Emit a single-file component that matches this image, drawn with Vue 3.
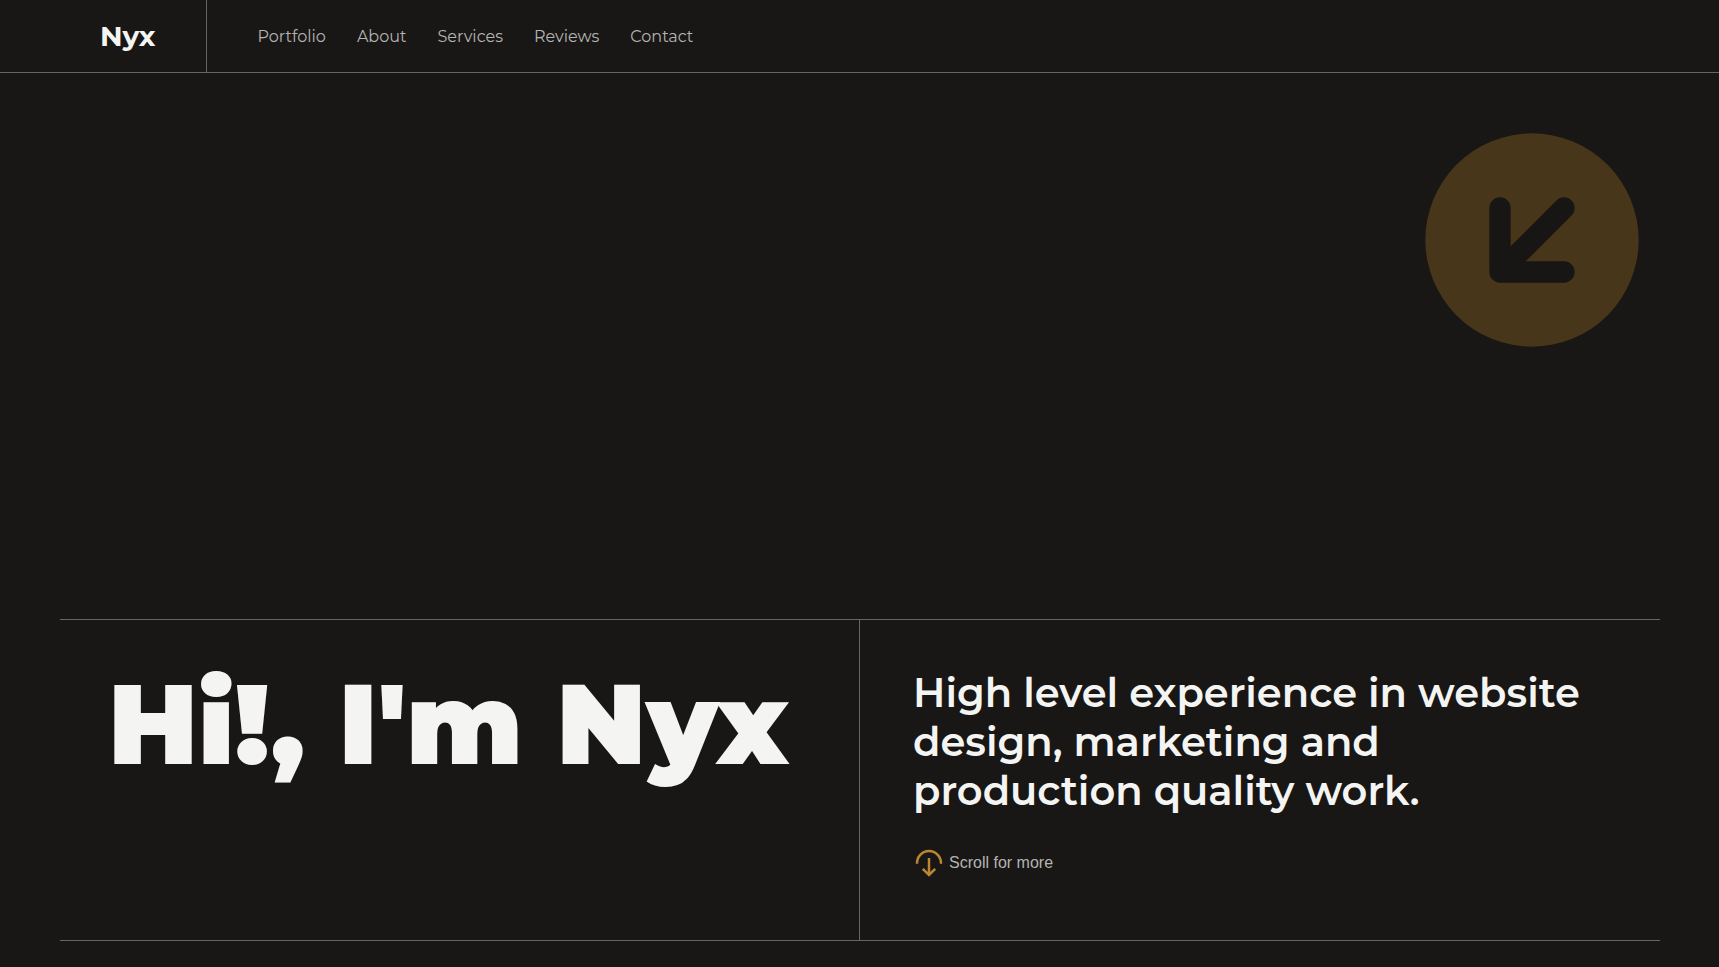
<script setup>
const links = ['Portfolio', 'About', 'Services', 'Reviews', 'Contact']
</script>

<template>
  <div class="page">
    <header class="header">
      <a class="brand" href="#home">Nyx</a>
      <nav class="nav" aria-label="Main">
        <a v-for="link in links" :key="link" :href="'#' + link.toLowerCase()">{{ link }}</a>
      </nav>
    </header>

    <main id="home" class="hero">
      <div class="stage">
        <svg class="badge" viewBox="0 0 24 24" aria-hidden="true">
          <circle cx="12" cy="12" r="10" fill="#473619" />
          <path d="M9 9v6h6M9 15l6-6" fill="none" stroke="#171614" stroke-width="2" stroke-linecap="round" stroke-linejoin="round" />
        </svg>
      </div>

      <section class="intro">
        <div class="greeting">
          <h1>Hi!, I'm Nyx</h1>
        </div>
        <div class="summary">
          <p>High level experience in website design, marketing and production quality work.</p>
          <a class="scroll" href="#portfolio">
            <svg viewBox="0 0 32 32" aria-hidden="true">
              <path d="M4 16.7v-.7a12 12 0 0 1 24 0v.7M16 11v17M9.8 21.8l6.2 6.2 6.2-6.2" fill="none" stroke="#bd8730" stroke-width="2.5" />
            </svg>
            <span>Scroll for more</span>
          </a>
        </div>
      </section>
    </main>
  </div>
</template>

<style>
body {
  margin: 0;
  background: #181715;
}
</style>

<style scoped>
.page {
  display: flex;
  flex-direction: column;
  min-height: 100vh;
  box-sizing: border-box;
  padding-bottom: 26px;
  background: #181715;
  color: #f4f4f2;
  font-family: Montserrat, Inter, sans-serif;
}

a {
  color: inherit;
  text-decoration: none;
}

.header {
  display: flex;
  height: 72px;
  border-bottom: 1px solid #666563;
}

.brand {
  display: flex;
  align-items: center;
  padding: 0 51px 0 100px;
  border-right: 1px solid #666563;
  font-size: 28px;
  font-weight: 700;
}

.nav {
  display: flex;
  align-items: center;
  gap: 31px;
  padding-left: 50px;
  color: #b5b4b2;
  font-size: 16px;
  font-weight: 400;
}

.hero {
  display: flex;
  flex: 1;
  flex-direction: column;
  margin: 0 59px 0 60px;
}

.stage {
  display: flex;
  flex: 1;
  justify-content: flex-end;
  align-items: flex-start;
  padding-top: 39px;
}

.badge {
  display: block;
  width: 256px;
  height: 256px;
}

.intro {
  display: grid;
  grid-template-columns: 1fr 1fr;
  border-top: 1px solid #666563;
  border-bottom: 1px solid #666563;
}

.greeting {
  padding: 48px;
  border-right: 1px solid #666563;
}

h1 {
  margin: 0;
  font-size: 112px;
  font-weight: 900;
  line-height: 112px;
  white-space: nowrap;
}

.summary {
  padding: 48px 53px 61px;
}

p {
  margin: 0 0 32px;
  font-size: 40px;
  font-weight: 600;
  line-height: 49px;
}

.scroll {
  display: inline-flex;
  align-items: center;
  gap: 4px;
  color: #b5b4b2;
  font-family: "Liberation Sans", Arial, sans-serif;
  font-size: 16px;
  vertical-align: top;
}

.scroll svg {
  width: 32px;
  height: 32px;
}
</style>
